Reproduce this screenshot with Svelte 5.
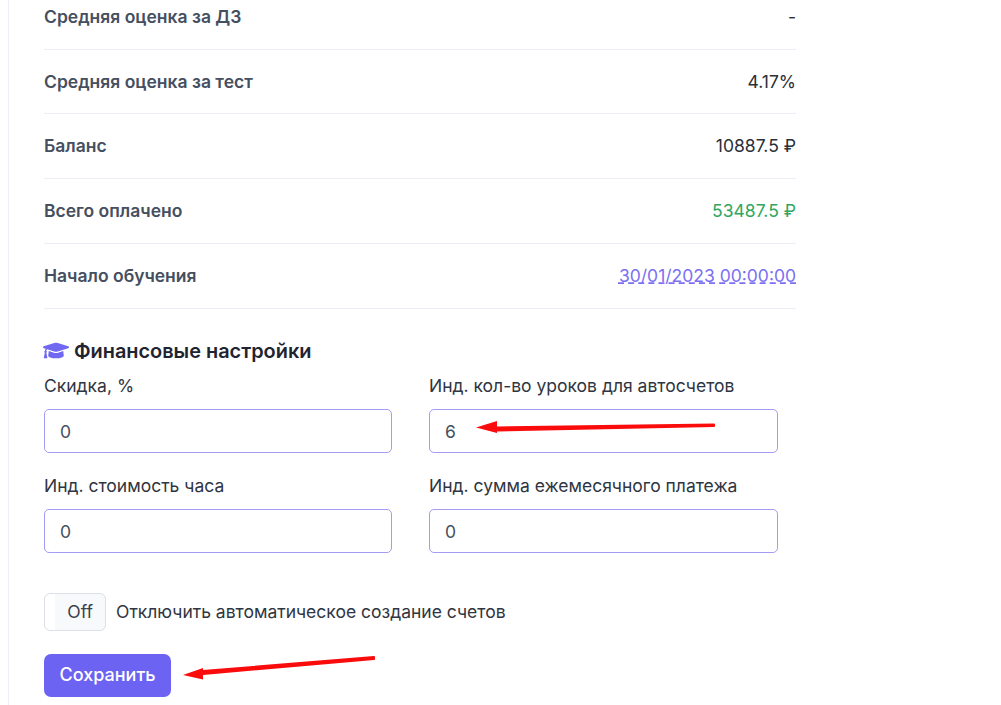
<script>
  const rows = [
    { label: "Средняя оценка за ДЗ", value: "-" },
    { label: "Средняя оценка за тест", value: "4.17%" },
    { label: "Баланс", value: "10887.5 ₽" },
    { label: "Всего оплачено", value: "53487.5 ₽", kind: "paid" },
    { label: "Начало обучения", value: "30/01/2023 00:00:00", kind: "date" }
  ];

  const fields = [
    { label: "Скидка, %", value: "0" },
    { label: "Инд. кол-во уроков для автосчетов", value: "6" },
    { label: "Инд. стоимость часа", value: "0" },
    { label: "Инд. сумма ежемесячного платежа", value: "0" }
  ];
</script>

<div class="page">
  <div class="card">
    <div class="stats">
      {#each rows as row}
        <div class="row">
          <span class="row-label">{row.label}</span>
          <span class="row-value {row.kind ?? ''}">{row.value}</span>
        </div>
      {/each}
    </div>

    <h5 class="heading">
      <svg class="cap" viewBox="0 0 640 512" aria-hidden="true">
        <path d="M622.34 153.2L343.4 67.5c-15.2-4.67-31.6-4.67-46.79 0L17.66 153.2c-23.54 7.23-23.54 38.36 0 45.59l48.63 14.94c-10.67 13.19-17.23 29.28-17.88 46.9C38.78 266.15 32 276.11 32 288c0 10.78 5.68 19.85 13.86 25.65L20.33 428.53C18.11 438.52 25.71 448 35.94 448h56.11c10.24 0 17.84-9.48 15.62-19.47L82.14 313.65C90.32 307.85 96 298.78 96 288c0-11.57-6.47-21.25-15.66-26.87.76-15.02 8.44-28.3 20.69-36.72L296.6 284.5c9.06 2.78 26.44 6.25 46.79 0l278.95-85.7c23.55-7.24 23.55-38.36 0-45.6zM352.79 315.09c-28.53 8.76-52.84 3.92-65.59 0l-145.02-44.55L128 384c0 35.35 85.96 64 192 64s192-28.65 192-64l-14.18-113.47-145.03 44.56z" />
      </svg>
      Финансовые настройки
    </h5>

    <div class="fields">
      {#each fields as field}
        <label class="field">
          <span class="field-label">{field.label}</span>
          <input class="input" type="text" value={field.value} />
        </label>
      {/each}
    </div>

    <div class="switch-row">
      <div class="switch"><span class="switch-handle"></span><span class="switch-off">Off</span></div>
      <span class="switch-label">Отключить автоматическое создание счетов</span>
    </div>

    <button class="save" type="button">Сохранить</button>
  </div>

  <!-- annotations drawn on top of the screenshot -->
  <svg class="marks" viewBox="0 0 1001 705" aria-hidden="true">
    <path d="M714 424.5 L497 427.5 L497 430.5 L714 426 Z" stroke="#fa0c0c" stroke-width="2" stroke-linejoin="round" fill="#fa0c0c" />
    <path d="M476 427.5 L497 421 L497 433 Z" fill="#fa0c0c" />
    <path d="M374 657 L203 671 L203 674 L374 659 Z" stroke="#fa0c0c" stroke-width="2" stroke-linejoin="round" fill="#fa0c0c" />
    <path d="M183 675 L203 668 L203 679.5 Z" fill="#fa0c0c" />
  </svg>
</div>

<style>
  :global(body) {
    background: #fff;
    font-family: Inter, "Liberation Sans", sans-serif;
  }
  .page {
    position: relative;
    height: 705px;
    overflow: hidden;
  }
  .card {
    margin: -15.1px 0 0 8px;
    width: 752px;
    height: 730px;
    border-left: 1px solid #eef0f6;
    padding-left: 35px;
  }
  .row {
    display: flex;
    justify-content: space-between;
    align-items: center;
    box-sizing: border-box;
    height: 64.75px;
    border-bottom: 1px solid #eceef5;
    font-size: 17.5px;
    line-height: 26px;
  }
  .row-label {
    color: #464f60;
    font-weight: 600;
  }
  .row-value {
    color: #2b2f38;
  }
  .paid {
    color: #2fa75f;
  }
  .date {
    color: #7b70f2;
    text-decoration: underline dashed;
    text-decoration-skip-ink: none;
    text-underline-offset: 1px;
  }
  .heading {
    display: flex;
    align-items: center;
    gap: 5px;
    margin: 27.85px 0 0 -1px;
    font-size: 19.9px;
    font-weight: 600;
    line-height: 28px;
    color: #1f2430;
  }
  .cap {
    width: 26px;
    height: 21px;
    fill: #7068f0;
  }
  .fields {
    display: grid;
    grid-template-columns: 348px 349px;
    column-gap: 37px;
    row-gap: 20px;
    margin-top: 8px;
  }
  .field {
    display: block;
  }
  .field-label {
    display: block;
    font-size: 17.5px;
    line-height: 26px;
    color: #2f3541;
    margin-bottom: 10px;
  }
  .input {
    display: block;
    box-sizing: border-box;
    width: 100%;
    height: 44px;
    padding: 1px 15px 0;
    border: 1px solid #a49cf2;
    border-radius: 5px;
    font: 17.5px/24px Inter, "Liberation Sans", sans-serif;
    color: #464f60;
    background: #fff;
    outline: none;
  }
  .switch-row {
    display: flex;
    align-items: center;
    gap: 10px;
    margin-top: 40px;
  }
  .switch {
    display: flex;
    align-items: center;
    justify-content: flex-end;
    position: relative;
    box-sizing: border-box;
    width: 62px;
    height: 38px;
    padding-right: 12px;
    border: 1px solid #dcdfe6;
    border-radius: 6px;
    background: #f8f9fb;
  }
  .switch-handle {
    position: absolute;
    left: 0;
    top: 0;
    bottom: 0;
    width: 10px;
    background: #fff;
    border-radius: 6px 0 0 6px;
  }
  .switch-off {
    font-size: 17.5px;
    color: #3a404c;
  }
  .switch-label {
    font-size: 17.5px;
    color: #2f3541;
  }
  .save {
    display: block;
    width: 127px;
    height: 43px;
    margin-top: 23px;
    padding: 0;
    border: 0;
    border-radius: 7px;
    background: #6c63f2;
    color: #fff;
    font: 500 18px/24px Inter, "Liberation Sans", sans-serif;
  }
  .marks {
    position: absolute;
    left: 0;
    top: 0;
    width: 1001px;
    height: 705px;
    pointer-events: none;
  }
</style>
